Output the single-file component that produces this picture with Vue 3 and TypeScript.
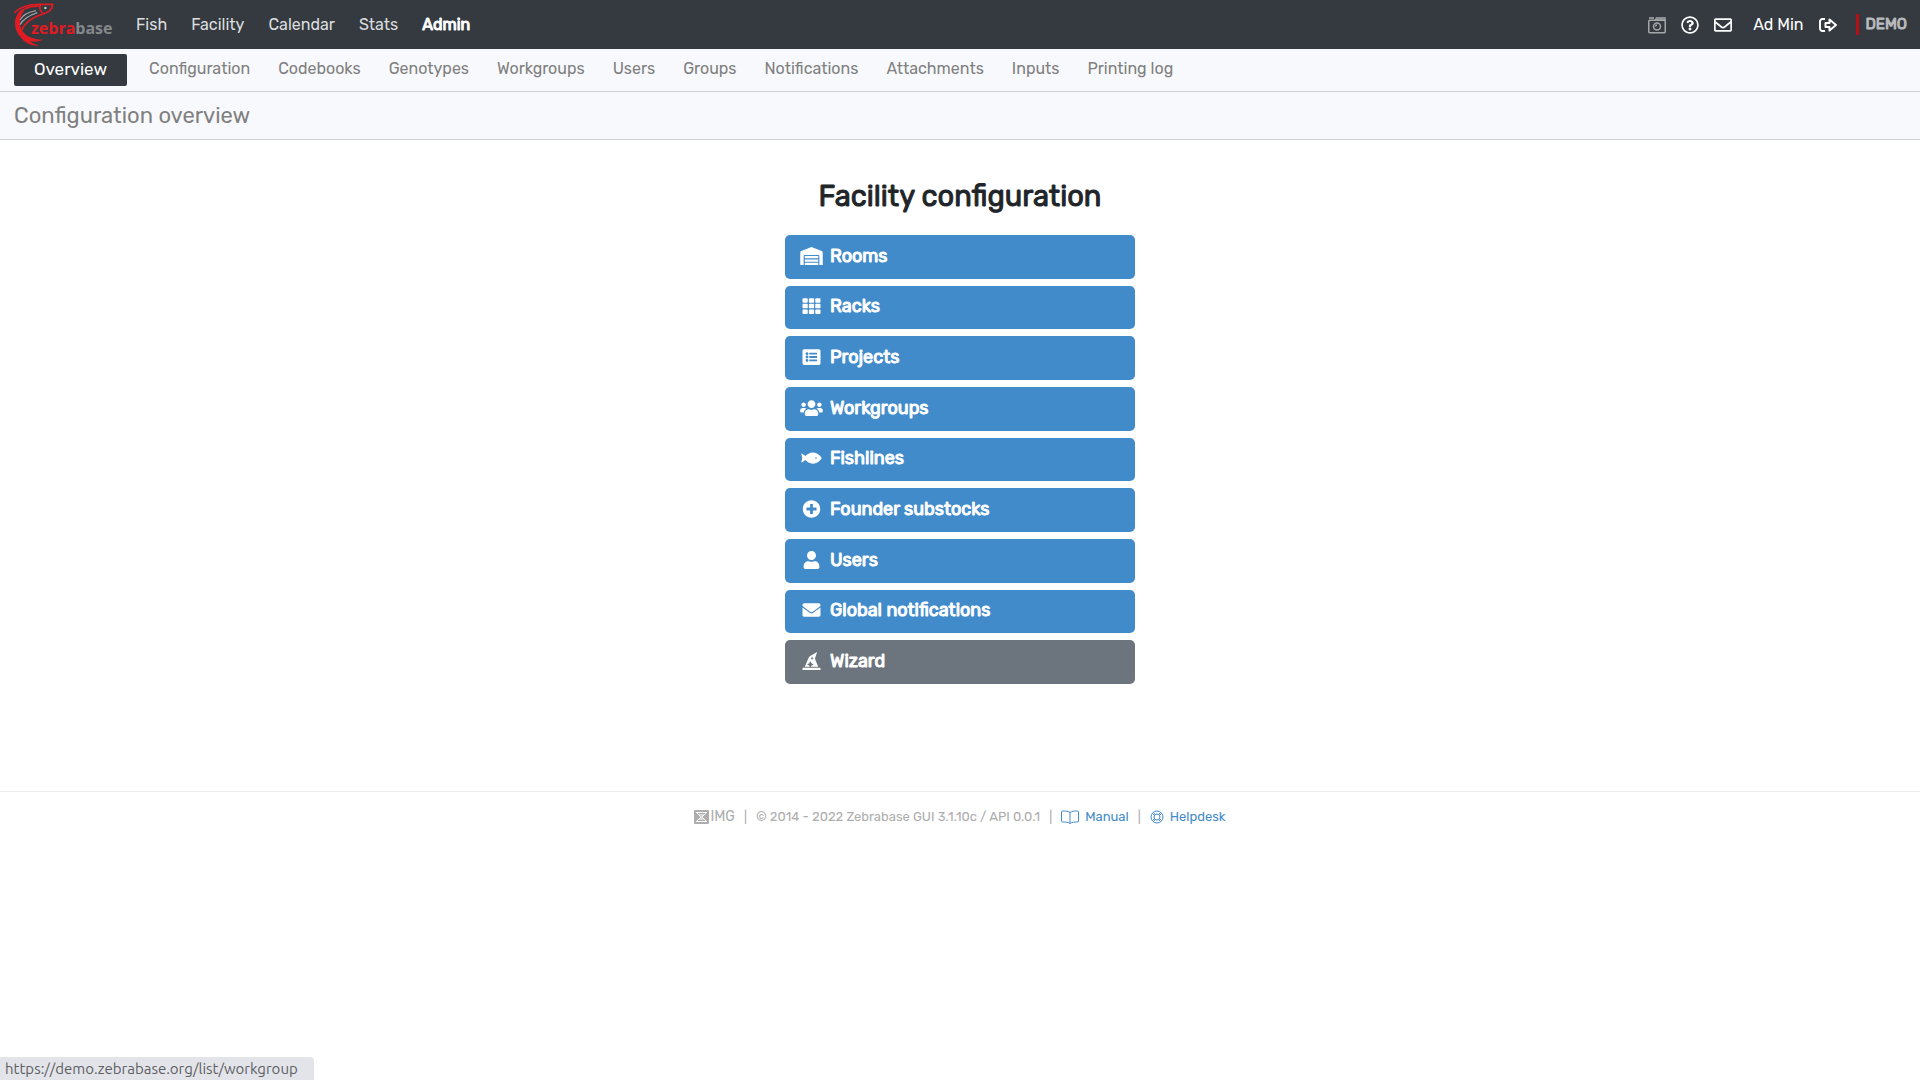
<script setup lang="ts">
interface Tile {
  label: string
  box: string
  path: string
  muted?: boolean
}

const mainLinks: string[] = ['Fish', 'Facility', 'Calendar', 'Stats', 'Admin']

const adminLinks: string[] = [
  'Overview', 'Configuration', 'Codebooks', 'Genotypes', 'Workgroups', 'Users',
  'Groups', 'Notifications', 'Attachments', 'Inputs', 'Printing log',
]

const tiles: Tile[] = [
  {
    label: 'Rooms',
    box: '0 0 640 512',
    path: 'M504 352H136.4c-4.4 0-8 3.6-8 8l-.1 48c0 4.4 3.6 8 8 8H504c4.4 0 8-3.6 8-8v-48c0-4.4-3.6-8-8-8zm0 96H136.1c-4.4 0-8 3.6-8 8l-.1 48c0 4.4 3.6 8 8 8h368c4.4 0 8-3.6 8-8v-48c0-4.4-3.6-8-8-8zm0-192H136.6c-4.4 0-8 3.6-8 8l-.1 48c0 4.4 3.6 8 8 8H504c4.4 0 8-3.6 8-8v-48c0-4.4-3.6-8-8-8zm106.5-139L338.4 3.7a48.15 48.15 0 0 0-36.9 0L29.5 117C11.7 124.5 0 141.9 0 161.3V504c0 4.4 3.6 8 8 8h80c4.4 0 8-3.6 8-8V256c0-17.6 14.6-32 32.6-32h382.8c18 0 32 14.4 32 32v248c0 4.4 3.6 8 8 8h80c4.4 0 8-3.6 8-8V161.3c0-19.4-11.7-36.8-29.5-44.3z',
  },
  {
    label: 'Racks',
    box: '0 0 512 512',
    path: 'M24 32h101.3a24 24 0 0 1 24 24v80a24 24 0 0 1-24 24H24a24 24 0 0 1-24-24V56a24 24 0 0 1 24-24zm181.3 0h101.4a24 24 0 0 1 24 24v80a24 24 0 0 1-24 24H205.3a24 24 0 0 1-24-24V56a24 24 0 0 1 24-24zm181.4 0H488a24 24 0 0 1 24 24v80a24 24 0 0 1-24 24H386.7a24 24 0 0 1-24-24V56a24 24 0 0 1 24-24zM24 192h101.3a24 24 0 0 1 24 24v80a24 24 0 0 1-24 24H24a24 24 0 0 1-24-24v-80a24 24 0 0 1 24-24zm181.3 0h101.4a24 24 0 0 1 24 24v80a24 24 0 0 1-24 24H205.3a24 24 0 0 1-24-24v-80a24 24 0 0 1 24-24zm181.4 0H488a24 24 0 0 1 24 24v80a24 24 0 0 1-24 24H386.7a24 24 0 0 1-24-24v-80a24 24 0 0 1 24-24zM24 352h101.3a24 24 0 0 1 24 24v80a24 24 0 0 1-24 24H24a24 24 0 0 1-24-24v-80a24 24 0 0 1 24-24zm181.3 0h101.4a24 24 0 0 1 24 24v80a24 24 0 0 1-24 24H205.3a24 24 0 0 1-24-24v-80a24 24 0 0 1 24-24zm181.4 0H488a24 24 0 0 1 24 24v80a24 24 0 0 1-24 24H386.7a24 24 0 0 1-24-24v-80a24 24 0 0 1 24-24z',
  },
  {
    label: 'Projects',
    box: '0 0 512 512',
    path: 'M464 480H48c-26.5 0-48-21.5-48-48V80c0-26.5 21.5-48 48-48h416c26.5 0 48 21.5 48 48v352c0 26.5-21.5 48-48 48zM128 120c-22.1 0-40 17.9-40 40s17.9 40 40 40 40-17.9 40-40-17.9-40-40-40zm0 96c-22.1 0-40 17.9-40 40s17.9 40 40 40 40-17.9 40-40-17.9-40-40-40zm0 96c-22.1 0-40 17.9-40 40s17.9 40 40 40 40-17.9 40-40-17.9-40-40-40zm288-136v-32c0-6.6-5.4-12-12-12H204c-6.6 0-12 5.4-12 12v32c0 6.6 5.4 12 12 12h200c6.6 0 12-5.4 12-12zm0 96v-32c0-6.6-5.4-12-12-12H204c-6.6 0-12 5.4-12 12v32c0 6.6 5.4 12 12 12h200c6.6 0 12-5.4 12-12zm0 96v-32c0-6.6-5.4-12-12-12H204c-6.6 0-12 5.4-12 12v32c0 6.6 5.4 12 12 12h200c6.6 0 12-5.4 12-12z',
  },
  {
    label: 'Workgroups',
    box: '0 0 640 512',
    path: 'M96 224c35.3 0 64-28.7 64-64s-28.7-64-64-64-64 28.7-64 64 28.7 64 64 64zm448 0c35.3 0 64-28.7 64-64s-28.7-64-64-64-64 28.7-64 64 28.7 64 64 64zm32 32h-64c-17.6 0-33.5 7.1-45.1 18.6 40.3 22.1 68.9 62 75.1 109.4h66c17.7 0 32-14.3 32-32v-32c0-35.3-28.7-64-64-64zm-256 0c61.9 0 112-50.1 112-112S381.9 32 320 32 208 82.1 208 144s50.1 112 112 112zm76.8 32h-8.3c-20.8 10-43.9 16-68.5 16s-47.6-6-68.5-16h-8.3C179.6 288 128 339.6 128 403.2V432c0 26.5 21.5 48 48 48h288c26.5 0 48-21.5 48-48v-28.8c0-63.6-51.6-115.2-115.2-115.2zm-223.7-13.4C161.5 263.1 145.6 256 128 256H64c-35.3 0-64 28.7-64 64v32c0 17.7 14.3 32 32 32h65.9c6.3-47.4 34.9-87.3 75.2-109.4z',
  },
  {
    label: 'Fishlines',
    box: '0 0 576 512',
    path: 'M327.1 96c-89.97 0-168.54 54.77-212.27 101.63L27.5 131.58c-12.13-9.18-30.24.6-27.14 14.66L24.54 256 .35 365.77c-3.1 14.06 15.01 23.83 27.14 14.66l87.33-66.05C158.55 361.23 237.13 416 327.1 416 464.56 416 576 288 576 256S464.56 96 327.1 96zm87.43 184c-13.25 0-24-10.75-24-24 0-13.26 10.75-24 24-24 13.26 0 24 10.74 24 24 0 13.25-10.75 24-24 24z',
  },
  {
    label: 'Founder substocks',
    box: '0 0 512 512',
    path: 'M256 8C119 8 8 119 8 256s111 248 248 248 248-111 248-248S393 8 256 8zm144 276c0 6.6-5.4 12-12 12h-92v92c0 6.6-5.4 12-12 12h-56c-6.6 0-12-5.4-12-12v-92h-92c-6.6 0-12-5.4-12-12v-56c0-6.6 5.4-12 12-12h92v-92c0-6.6 5.4-12 12-12h56c6.6 0 12 5.4 12 12v92h92c6.6 0 12 5.4 12 12v56z',
  },
  {
    label: 'Users',
    box: '0 0 448 512',
    path: 'M224 256c70.7 0 128-57.3 128-128S294.7 0 224 0 96 57.3 96 128s57.3 128 128 128zm89.6 32h-16.7c-22.2 10.2-46.9 16-72.9 16s-50.6-5.8-72.9-16h-16.7C60.2 288 0 348.2 0 422.4V464c0 26.5 21.5 48 48 48h352c26.5 0 48-21.5 48-48v-41.6c0-74.2-60.2-134.4-134.4-134.4z',
  },
  {
    label: 'Global notifications',
    box: '0 0 512 512',
    path: 'M502.3 190.8c3.9-3.1 9.7-.2 9.7 4.7V400c0 26.5-21.5 48-48 48H48c-26.5 0-48-21.5-48-48V195.6c0-5 5.7-7.8 9.7-4.7 22.4 17.4 52.1 39.5 154.1 113.6 21.1 15.4 56.7 47.8 92.2 47.6 35.7.3 72-32.8 92.3-47.6 102-74.1 131.6-96.3 154-113.7zM256 320c23.2.4 56.6-29.2 73.4-41.4 132.7-96.3 142.8-104.7 173.4-128.7 5.8-4.5 9.2-11.5 9.2-18.9v-19c0-26.5-21.5-48-48-48H48c-26.5 0-48 21.5-48 48v19c0 7.4 3.4 14.3 9.2 18.9 30.6 23.9 40.7 32.4 173.4 128.7 16.8 12.2 50.2 41.8 73.4 41.4z',
  },
  {
    label: 'Wizard',
    box: '0 0 512 512',
    path: 'M496 448H16c-8.84 0-16 7.16-16 16v32c0 8.84 7.16 16 16 16h480c8.84 0 16-7.16 16-16v-32c0-8.84-7.16-16-16-16zm-304-64l-64-32 64-32 32-64 32 64 64 32-64 32-16 32h208l-86.41-201.63a63.955 63.955 0 0 1-1.89-45.45L416 0 228.42 107.19a127.989 127.989 0 0 0-53.46 59.15L64 416h144l-16-32zm64-224l16-32 16 32 32 16-32 16-16 32-16-32-32-16 32-16z',
    muted: true,
  },
]
</script>

<template>
  <div class="page">
    <header class="topbar">
      <a class="brand" href="#" aria-label="zebrabase">
        <svg class="brand-mark" viewBox="0 0 330 147" aria-hidden="true">
          <path class="red" d="M48 24C34 40 26 62 32 82C40 106 64 119 100 119C86 125 72 126 60 123C66 129 76 134 88 137C60 139 42 126 32 112C12 90 10 60 24 40C30 31 38 26 48 24z" />
          <path class="red-line" d="M13 38C30 20 60 12 96 13H128C128 28 114 38 96 43C70 51 46 62 36 90" />
          <path class="red-line" d="M44 26C58 20 70 18 88 18M92 14C87 22 90 33 98 39" />
          <path class="grey-line" d="M30 74C40 56 58 46 82 38" />
          <path class="grey-line" d="M30 60C38 46 56 36 78 32" />
          <circle class="grey" cx="106" cy="24" r="4" />
        </svg>
        <span class="brand-name"><b>zebra</b><i>base</i></span>
      </a>
      <nav class="main-nav" aria-label="Main">
        <a v-for="link in mainLinks" :key="link" href="#" :class="{ current: link === 'Admin' }">{{ link }}</a>
      </nav>
      <div class="tools">
        <button type="button" class="icon-button dim" aria-label="Screenshot">
          <svg viewBox="0 0 18 18">
            <path d="M1 1h5v2H1zM6 5l2-4h9a1 1 0 0 1 1 1v3z" opacity="0.8" />
            <g class="stroke"><rect x="0.75" y="4.25" width="16.500" height="12.500" rx="1" /><circle cx="9" cy="10.500" r="3.500" /><path d="M7.500 10.500A1.500 1.500 0 0 1 9 9" /></g>
          </svg>
        </button>
        <button type="button" class="icon-button" aria-label="Help">
          <svg viewBox="0 0 512 512"><path d="M256 8C119.043 8 8 119.083 8 256c0 136.997 111.043 248 248 248s248-111.003 248-248C504 119.083 392.957 8 256 8zm0 448c-110.532 0-200-89.431-200-200 0-110.495 89.472-200 200-200 110.491 0 200 89.471 200 200 0 110.53-89.431 200-200 200zm107.244-255.2c0 67.052-72.421 68.084-72.421 92.863V300c0 6.627-5.373 12-12 12h-45.647c-6.627 0-12-5.373-12-12v-8.659c0-35.745 27.1-50.034 47.579-61.516 17.561-9.845 28.324-16.541 28.324-29.579 0-17.246-21.999-28.693-39.784-28.693-23.189 0-33.894 10.977-48.942 29.969-4.057 5.12-11.46 6.071-16.666 2.124l-27.824-21.098c-5.107-3.872-6.251-11.066-2.644-16.363C184.846 131.491 214.94 112 261.794 112c49.071 0 101.45 38.304 101.45 88.8zM298 368c0 23.159-18.841 42-42 42s-42-18.841-42-42 18.841-42 42-42 42 18.841 42 42z" /></svg>
        </button>
        <button type="button" class="icon-button" aria-label="Messages">
          <svg viewBox="0 0 512 512"><path d="M464 64H48C21.49 64 0 85.49 0 112v288c0 26.51 21.49 48 48 48h416c26.51 0 48-21.49 48-48V112c0-26.51-21.49-48-48-48zm0 48v40.805c-22.422 18.259-58.168 46.651-134.587 106.49-16.841 13.247-50.201 45.072-73.413 44.701-23.208.375-56.579-31.459-73.413-44.701C106.18 199.465 70.425 171.067 48 152.805V112h416zM48 400V214.398c22.914 18.251 55.409 43.862 104.938 82.646 21.857 17.205 60.134 55.186 103.062 54.955 42.717.231 80.509-37.199 103.053-54.947 49.528-38.783 82.032-64.401 104.947-82.653V400H48z" /></svg>
        </button>
        <a class="account" href="#">Ad Min</a>
        <button type="button" class="icon-button" aria-label="Sign out">
          <svg viewBox="0 0 18 18"><path class="stroke thick" d="M6 3H3.500A2.500 2.500 0 0 0 1 5.500v7A2.500 2.500 0 0 0 3.500 15H6M6.500 7H10.500V3.500L17 9l-6.500 5.500V11H6.500z" /></svg>
        </button>
        <span class="demo">DEMO</span>
      </div>
    </header>

    <nav class="subnav" aria-label="Admin">
      <a v-for="link in adminLinks" :key="link" href="#" :class="{ active: link === 'Overview' }">{{ link }}</a>
    </nav>

    <h1 class="page-title">Configuration overview</h1>

    <main class="content">
      <h2>Facility configuration</h2>
      <div class="tiles">
        <a v-for="tile in tiles" :key="tile.label" href="#" class="tile" :class="{ muted: tile.muted }">
          <svg :viewBox="tile.box" aria-hidden="true"><path fill-rule="evenodd" :d="tile.path" /></svg>
          <span>{{ tile.label }}</span>
        </a>
      </div>
    </main>

    <footer class="footer">
      <a class="img-logo" href="#">
        <svg viewBox="0 0 15 14" aria-hidden="true">
          <rect width="15" height="14" rx="1" />
          <path d="M2 2.500H13M2 11.500H13M3 2.500C4 6 11 8 12 11.500M12 2.500C11 6 4 8 3 11.500M5 5h5M5 9h5" />
        </svg>
        <span>IMG</span>
      </a>
      <span>|</span>
      <span>© 2014 - 2022 Zebrabase GUI 3.1.10c / API 0.0.1</span>
      <span>|</span>
      <a class="foot-link" href="#">
        <svg class="book" viewBox="0 0 18 14" aria-hidden="true"><path d="M9 2.500C7 1 4 1 1.500 1a1 1 0 0 0-1 1v9a1 1 0 0 0 1 1C4 12 7 12 9 13.500 11 12 14 12 16.500 12a1 1 0 0 0 1-1V2a1 1 0 0 0-1-1C14 1 11 1 9 2.500zV13" /></svg>
        Manual
      </a>
      <span>|</span>
      <a class="foot-link" href="#">
        <svg class="ring" viewBox="0 0 14 14" aria-hidden="true"><circle cx="7" cy="7" r="6" /><circle cx="7" cy="7" r="3" /><path d="M2.500 3.500l2 2M3.500 2.500l2 2M11.500 3.500l-2 2M10.500 2.500l-2 2M2.500 10.500l2-2M3.500 11.500l2-2M11.500 10.500l-2-2M10.500 11.500l-2-2" /></svg>
        Helpdesk
      </a>
    </footer>

    <div class="link-status">https://demo.zebrabase.org/list/workgroup</div>
  </div>
</template>

<style>
body {
  margin: 0;
  background: #fff;
}
</style>

<style scoped>
.page {
  font-family: Rubik, Roboto, "Liberation Sans", sans-serif;
  font-size: 16px;
  font-weight: 400;
  line-height: 24px;
  color: #212529;
}

a {
  color: inherit;
  text-decoration: none;
}

svg {
  display: block;
  fill: currentColor;
}

.topbar {
  display: flex;
  align-items: center;
  height: 49px;
  padding: 0 13px 0 10px;
  background: #343a40;
  color: #fff;
}

.brand {
  position: relative;
  display: block;
  width: 110px;
  height: 49px;
}

.brand-mark {
  width: 110px;
  height: 49px;
}

.brand-mark .red {
  fill: #e01b22;
}

.brand-mark .red-line {
  fill: none;
  stroke: #e01b22;
  stroke-width: 5;
}

.brand-mark .grey-line {
  fill: none;
  stroke: #9a9c9e;
  stroke-width: 4;
}

.brand-mark .grey {
  fill: #b5b7b9;
}

.brand-name {
  position: absolute;
  left: 21px;
  top: 18px;
  font-family: "Open Sans", "Noto Sans", sans-serif;
  font-size: 16px;
  line-height: 20px;
}

.brand-name b {
  font-weight: 700;
  color: #e01b22;
}

.brand-name i {
  font-style: normal;
  font-weight: 700;
  color: #85888b;
}

.main-nav {
  display: flex;
  gap: 24px;
  margin-left: 16px;
  color: #dcdddf;
}

.main-nav .current {
  color: #fff;
  -webkit-text-stroke: 1px;
}

.tools {
  display: flex;
  align-items: center;
  margin-left: auto;
  gap: 15px;
}

.icon-button {
  padding: 0;
  border: 0;
  background: none;
  color: #fff;
}

.icon-button svg {
  width: 18px;
  height: 18px;
}

.icon-button.dim {
  color: #a4a7aa;
}

.stroke {
  fill: none;
  stroke: currentColor;
  stroke-width: 1.5;
}

.stroke.thick {
  stroke-width: 2;
  stroke-linejoin: round;
}

.account {
  margin-left: 6px;
}

.demo {
  margin-left: 4px;
  padding-left: 7px;
  border-left: 3px solid #b30f15;
  font-size: 15px;
  line-height: 21px;
  color: #b9bbbd;
  -webkit-text-stroke: 1px;
}

.subnav {
  display: flex;
  align-items: flex-start;
  gap: 28px;
  height: 37px;
  padding: 5px 14px 0;
  border-bottom: 1px solid #ced0d3;
  background: #f8f9fc;
  color: #808080;
}

.subnav a {
  padding: 3px 0;
}

.subnav .active {
  margin-right: -6px;
  padding: 3px 20px 5px;
  border-radius: 2px;
  background: #343a40;
  color: #fff;
  font-size: 17px;
}

.page-title {
  margin: 0;
  padding: 8px 14px;
  border-bottom: 1px solid #ced0d3;
  background: #f8f9fc;
  color: #808080;
  font-size: 22px;
  font-weight: 400;
  line-height: 31px;
}

.content {
  padding: 39px 16px 107px;
}

.content h2 {
  margin: 0 0 22px;
  font-size: 29px;
  font-weight: 400;
  line-height: 34px;
  text-align: center;
  -webkit-text-stroke: 1px;
}

.tiles {
  display: grid;
  grid-auto-rows: 1fr;
  gap: 7px;
  max-width: 350px;
  min-height: 449px;
  margin: 0 auto;
}

.tile {
  display: flex;
  align-items: center;
  gap: 7px;
  padding: 0 15px 2px;
  border-radius: 5px;
  background: #428bca;
  color: #fff;
  font-size: 18px;
  -webkit-text-stroke: 1px;
}

.tile.muted {
  background: #6c757d;
}

.tile svg {
  width: 23px;
  height: 18px;
}

.footer {
  display: flex;
  justify-content: center;
  align-items: center;
  gap: 9px;
  padding: 13px 16px;
  border-top: 1px solid #ececec;
  color: #adadad;
  font-size: 13px;
}

.img-logo {
  display: flex;
  align-items: center;
  gap: 1px;
  font-size: 14px;
}

.img-logo svg {
  width: 15px;
  height: 14px;
}

.img-logo path {
  fill: none;
  stroke: #fff;
}

.foot-link {
  display: flex;
  align-items: center;
  gap: 6px;
  color: #428bca;
}

.foot-link svg {
  fill: none;
  stroke: currentColor;
}

.book {
  width: 18px;
  height: 14px;
}

.ring {
  width: 14px;
  height: 14px;
}

.link-status {
  position: fixed;
  left: 0;
  bottom: 0;
  padding: 0 16px 0 5px;
  border-top-right-radius: 4px;
  background: #e3e4ea;
  color: #5d5f63;
  font-family: Ubuntu, "Noto Sans", sans-serif;
  font-size: 15px;
  font-weight: 400;
  line-height: 23px;
}
</style>
